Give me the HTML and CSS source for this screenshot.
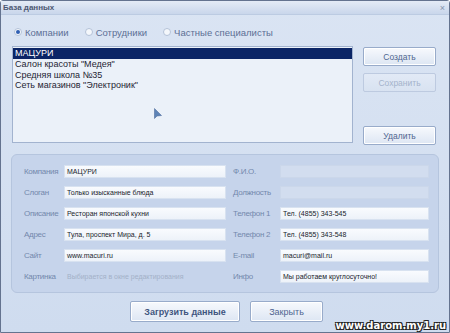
FILE: index.html
```html
<!DOCTYPE html>
<html lang="ru">
<head>
<meta charset="UTF-8">
<title>База данных</title>
<link rel="stylesheet" href="styles.css">
</head>
<body>
<div class="window">
  <!-- заголовок окна -->
  <div class="titlebar">
    <span class="title">База данных</span>
    <span class="close">×</span>
  </div>

  <!-- переключатель -->
  <div class="radios">
    <label class="radio checked"><span class="dot"></span>Компании</label>
    <label class="radio"><span class="dot"></span>Сотрудники</label>
    <label class="radio"><span class="dot"></span>Частные специалисты</label>
  </div>

  <!-- список и кнопки -->
  <div class="main">
    <div class="list">
      <div class="item selected">МАЦУРИ</div>
      <div class="item">Салон красоты "Медея"</div>
      <div class="item">Средняя школа №35</div>
      <div class="item">Сеть магазинов "Электроник"</div>
      <svg class="cursor" viewBox="0 0 8 12">
        <path d="M0.5 0.5 L0.5 10.5 L3 8 L7.5 7.5 Z"/>
      </svg>
    </div>
    <div class="side">
      <button class="btn">Создать</button>
      <button class="btn disabled">Сохранить</button>
      <button class="btn push">Удалить</button>
    </div>
  </div>

  <!-- карточка -->
  <div class="panel">
    <span class="lbl">Компания</span><span class="field">МАЦУРИ</span>
    <span class="lbl r">Ф.И.О.</span><span class="field off"></span>

    <span class="lbl">Слоган</span><span class="field">Только изысканные блюда</span>
    <span class="lbl r">Должность</span><span class="field off"></span>

    <span class="lbl">Описание</span><span class="field">Ресторан японской кухни</span>
    <span class="lbl r">Телефон 1</span><span class="field">Тел. (4855) 343-545</span>

    <span class="lbl">Адрес</span><span class="field">Тула, проспект Мира, д. 5</span>
    <span class="lbl r">Телефон 2</span><span class="field">Тел. (4855) 343-548</span>

    <span class="lbl">Сайт</span><span class="field">www.macuri.ru</span>
    <span class="lbl r">E-mail</span><span class="field">macuri@mail.ru</span>

    <span class="lbl">Картинка</span><span class="hint">Выбирается в окне редактирования</span>
    <span class="lbl r">Инфо</span><span class="field">Мы работаем круглосуточно!</span>
  </div>

  <div class="bottom">
    <button class="btn big">Загрузить данные</button>
    <button class="btn close-btn">Закрыть</button>
  </div>

  <div class="mark">www.darom.my1.ru</div>
</div>
</body>
</html>
```

FILE: styles.css
```css
/* страница */
body {
  margin: 0;
  font-family: "Liberation Sans", "DejaVu Sans", sans-serif;
}

/* окно */
.window {
  position: relative;
  width: 450px;
  height: 333px;
  box-sizing: border-box;
  border: 1px solid #64738f;
  border-radius: 3px 3px 0 0;
  background: linear-gradient(#dae4f3, #cfdcef);
  display: flex;
  flex-direction: column;
}

.titlebar {
  height: 13px;
  display: flex;
  justify-content: space-between;
  align-items: center;
  padding: 0 4px 0 2px;
  background: linear-gradient(#e4ebf6, #c9d6eb);
  border-bottom: 1px solid #bccbe2;
}

.title {
  font-size: 8px;
  font-weight: bold;
  color: #4d5872;
}

.close {
  font-size: 9px;
  color: #8594ad;
}

/* переключатель */
.radios {
  display: flex;
  gap: 16px;
  padding: 10px 0 0 13px;
  height: 14px;
  align-items: center;
}

.radio {
  display: flex;
  align-items: center;
  gap: 3px;
  font-size: 9.5px;
  color: #5c6f95;
}

.dot {
  width: 6px;
  height: 6px;
  border-radius: 50%;
  border: 1px solid #b4c2d8;
  background: #f4f7fb;
  position: relative;
}

.radio.checked .dot::after {
  content: "";
  position: absolute;
  left: 1px;
  top: 1px;
  width: 4px;
  height: 4px;
  border-radius: 50%;
  background: #2f5fb3;
}

/* список */
.main {
  display: flex;
  gap: 10px;
  padding: 7px 0 0 11px;
}

.list {
  position: relative;
  width: 341px;
  height: 97px;
  box-sizing: border-box;
  border: 1px solid #a2b3cf;
  background: #ebf1f9;
  padding-top: 1px;
}

.item {
  height: 10.5px;
  line-height: 10.5px;
  padding-left: 2px;
  font-size: 9px;
  color: #1e2433;
}

.item.selected {
  height: 11px;
  background: #0b2566;
  color: #fff;
}

.cursor {
  position: absolute;
  left: 141px;
  top: 61px;
  width: 8px;
  height: 12px;
  fill: #5d83b6;
  stroke: #3e5f92;
  stroke-width: 0.5;
}

.side {
  display: flex;
  flex-direction: column;
  gap: 7px;
  padding-top: 1px;
}

/* кнопки */
.btn {
  width: 73px;
  height: 19px;
  padding: 0;
  border: 1px solid #98abca;
  border-radius: 2px;
  background: linear-gradient(#f7f9fd, #dde6f3);
  box-shadow: inset 0 0 0 1px #ffffff;
  font-family: inherit;
  font-size: 8.5px;
  color: #4f6590;
}

.btn.disabled {
  border-color: #bdcae0;
  background: linear-gradient(#e2eaf6, #d8e2f1);
  box-shadow: none;
  color: #a4b3cb;
}

.btn.push {
  margin-top: 27px;
}

/* карточка */
.panel {
  margin: 9px 0 0 10px;
  width: 428px;
  height: 139px;
  box-sizing: border-box;
  padding: 10px 11px 0 12px;
  border: 1px solid #b5c5de;
  border-radius: 6px;
  background: #c6d4eb;
  display: grid;
  grid-template-columns: 40px 162px 54px 149px;
  grid-auto-rows: 13px;
  row-gap: 8px;
}

.lbl {
  font-size: 8px;
  letter-spacing: -0.3px;
  line-height: 13px;
  color: #7388ab;
}

.lbl.r {
  padding-left: 7px;
}

.field {
  height: 13px;
  box-sizing: border-box;
  border: 1px solid #d8e2f0;
  background: linear-gradient(#f9fbfe, #edf2f9);
  font-size: 7px;
  line-height: 11px;
  padding-left: 2px;
  color: #20242c;
  white-space: nowrap;
  overflow: hidden;
}

.field.off {
  background: #d2ddef;
  border-color: #cbd7ea;
}

.hint {
  font-size: 7px;
  line-height: 13px;
  padding-left: 3px;
  color: #a3b1c8;
  white-space: nowrap;
}

/* нижние кнопки */
.bottom {
  display: flex;
  justify-content: center;
  gap: 10px;
  padding: 8px 0 0 3px;
}

.btn.big {
  width: 110px;
  height: 21px;
  font-size: 9px;
  font-weight: bold;
  color: #3f5580;
}

.btn.close-btn {
  height: 21px;
  font-size: 9px;
}

/* водяной знак */
.mark {
  position: absolute;
  right: 3px;
  bottom: 1px;
  font-family: "DejaVu Sans", sans-serif;
  font-weight: bold;
  font-size: 10px;
  color: #fff;
  text-shadow: -1px -1px 0 #222, 1px -1px 0 #222, -1px 1px 0 #222, 1px 1px 0 #222;
}
```
